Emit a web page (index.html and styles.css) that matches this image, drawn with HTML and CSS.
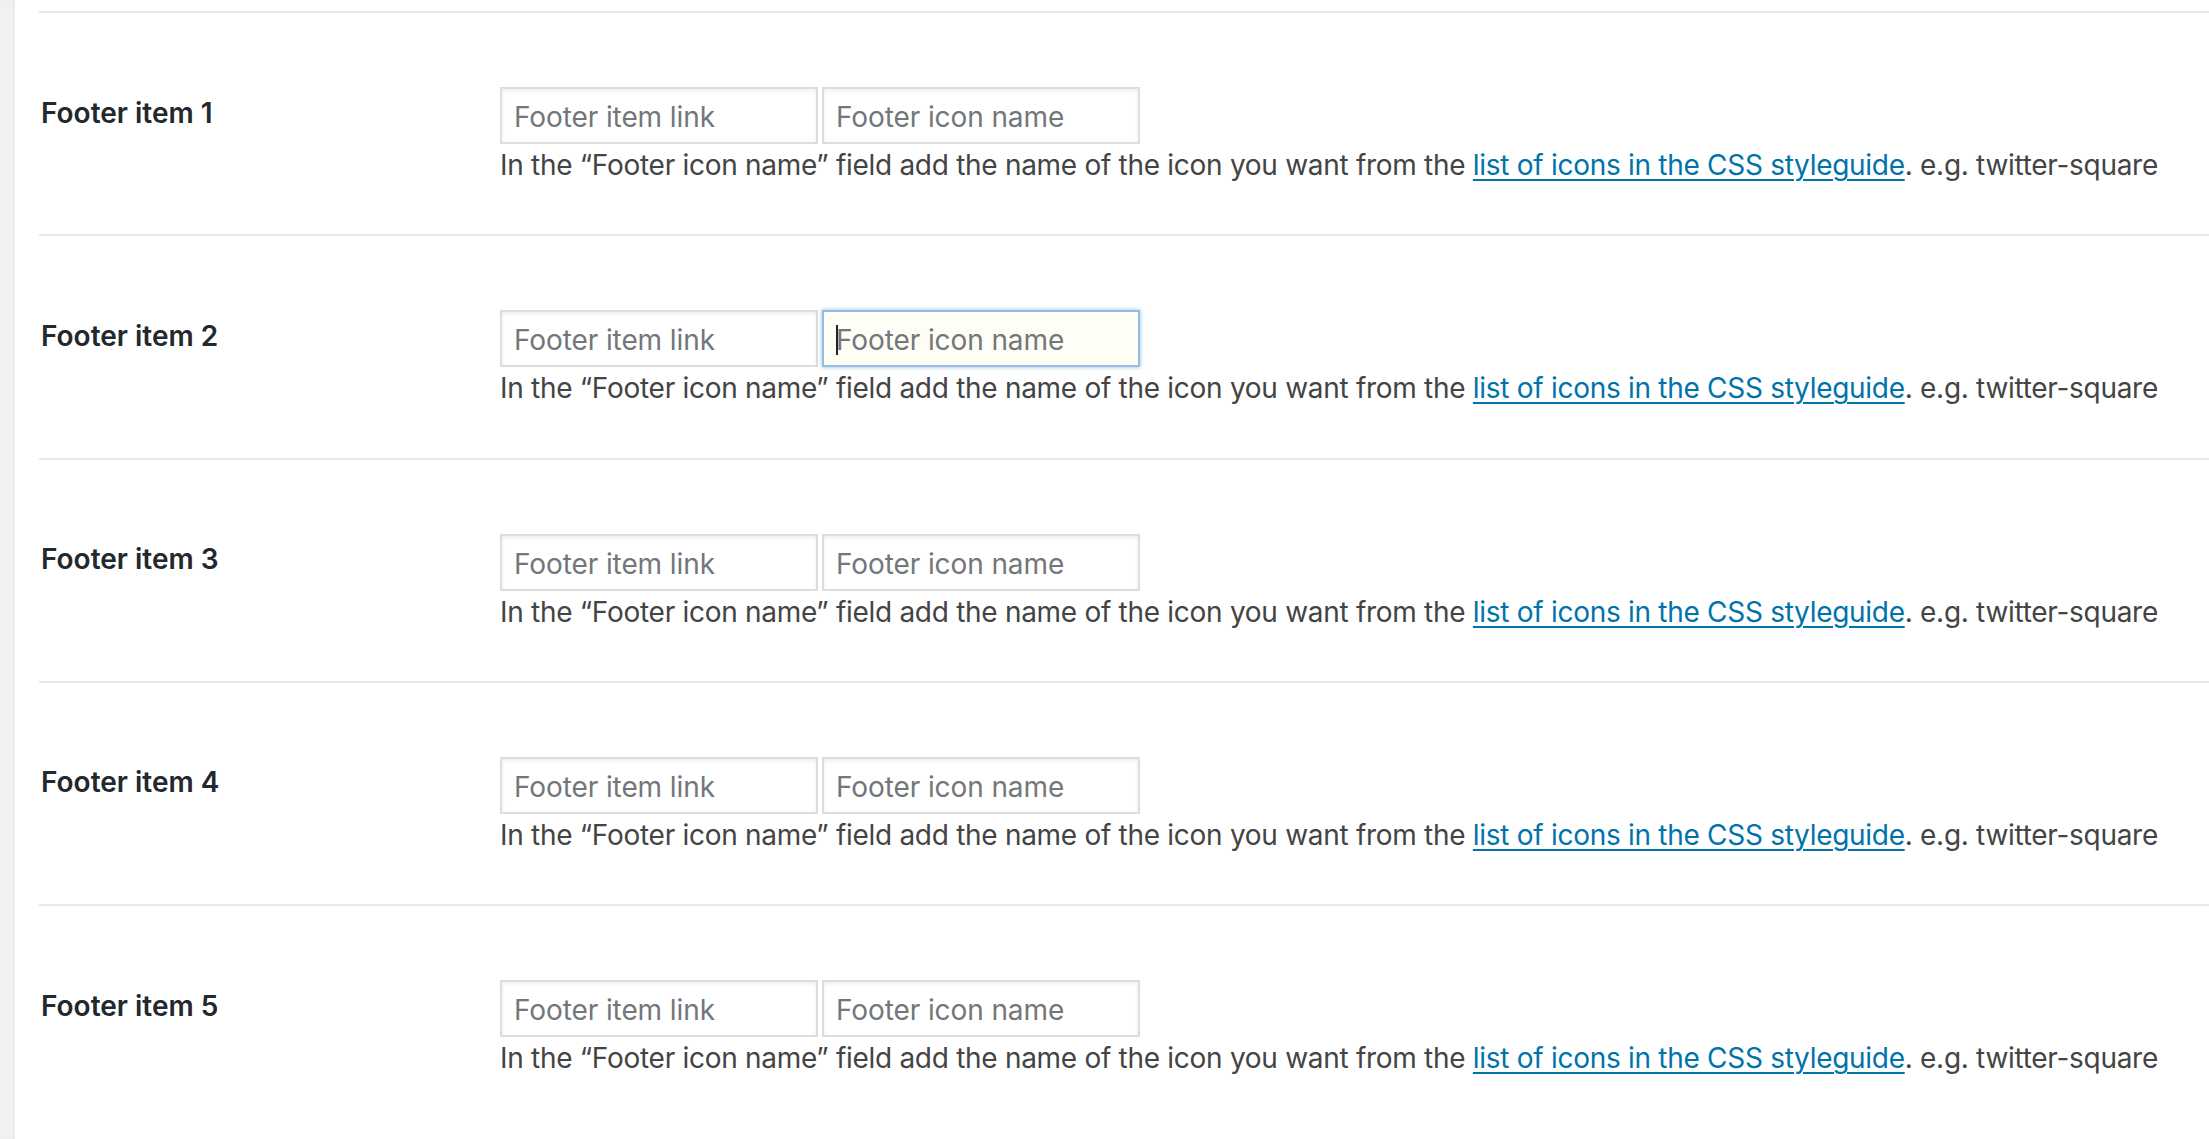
FILE: index.html
```html
<!DOCTYPE html>
<html lang="en">
<head>
<meta charset="utf-8">
<title>Footer settings</title>
<link rel="stylesheet" href="styles.css">
</head>
<body>
<div class="screen">
  <aside class="sidebar-edge"></aside>
  <main class="settings">
    <div class="field-row">
      <div class="field-label">Footer item 1</div>
      <div class="field-control">
        <div class="inputs">
          <input class="text-input" type="text" placeholder="Footer item link">
          <input class="text-input" type="text" placeholder="Footer icon name">
        </div>
        <p class="description">In the “Footer icon name” field add the name of the icon you want from the <a href="#">list of icons in the CSS styleguide</a>. e.g. twitter-square</p>
      </div>
    </div>
    <div class="field-row">
      <div class="field-label">Footer item 2</div>
      <div class="field-control">
        <div class="inputs">
          <input class="text-input" type="text" placeholder="Footer item link">
          <span class="focus-wrap"><input class="text-input is-focused" type="text" placeholder="Footer icon name"><span class="caret"></span></span>
        </div>
        <p class="description">In the “Footer icon name” field add the name of the icon you want from the <a href="#">list of icons in the CSS styleguide</a>. e.g. twitter-square</p>
      </div>
    </div>
    <div class="field-row">
      <div class="field-label">Footer item 3</div>
      <div class="field-control">
        <div class="inputs">
          <input class="text-input" type="text" placeholder="Footer item link">
          <input class="text-input" type="text" placeholder="Footer icon name">
        </div>
        <p class="description">In the “Footer icon name” field add the name of the icon you want from the <a href="#">list of icons in the CSS styleguide</a>. e.g. twitter-square</p>
      </div>
    </div>
    <div class="field-row">
      <div class="field-label">Footer item 4</div>
      <div class="field-control">
        <div class="inputs">
          <input class="text-input" type="text" placeholder="Footer item link">
          <input class="text-input" type="text" placeholder="Footer icon name">
        </div>
        <p class="description">In the “Footer icon name” field add the name of the icon you want from the <a href="#">list of icons in the CSS styleguide</a>. e.g. twitter-square</p>
      </div>
    </div>
    <div class="field-row">
      <div class="field-label">Footer item 5</div>
      <div class="field-control">
        <div class="inputs">
          <input class="text-input" type="text" placeholder="Footer item link">
          <input class="text-input" type="text" placeholder="Footer icon name">
        </div>
        <p class="description">In the “Footer icon name” field add the name of the icon you want from the <a href="#">list of icons in the CSS styleguide</a>. e.g. twitter-square</p>
      </div>
    </div>
  </main>
</div>
</body>
</html>
```

FILE: styles.css
```css
html, body {
  margin: 0;
  padding: 0;
  background: #fff;
}

body {
  font-family: Inter, "Noto Sans", sans-serif;
  font-size: 28px;
  color: #444;
  overflow: hidden;
}

.screen {
  display: flex;
  min-height: 1139px;
}

.sidebar-edge {
  flex: 0 0 15px;
  background: #f1f1f1;
  box-shadow: inset -2px 0 2px rgba(0, 0, 0, 0.03);
}

.settings {
  flex: 1;
  padding: 11px 0 0 24px;
}

.field-row {
  display: grid;
  grid-template-columns: 461px 1fr;
  border-top: 2px solid #e8e8e8;
  padding: 74px 0 48.3px;
}

.field-label {
  font-weight: 600;
  color: #23282d;
  line-height: 36.4px;
  padding: 7.6px 0 0 2px;
}

.field-control {
  display: flex;
  flex-direction: column;
}

.inputs {
  display: flex;
  gap: 4px;
}

.text-input {
  box-sizing: border-box;
  width: 318px;
  height: 57px;
  margin: 0;
  padding: 3px 12px 0;
  border: 2px solid #ddd;
  border-radius: 0;
  box-shadow: inset 0 2px 4px rgba(0, 0, 0, 0.07);
  background: #fff;
  font-family: inherit;
  font-size: 28px;
  letter-spacing: -0.1px;
  color: #32373c;
  outline: none;
}

.text-input::placeholder {
  color: #72777c;
  opacity: 1;
}

.focus-wrap {
  position: relative;
  display: block;
}

.text-input.is-focused {
  border-color: #93bde2;
  background: #fffef6;
  box-shadow: 0 0 4px rgba(30, 140, 190, 0.55);
}

.caret {
  position: absolute;
  left: 14px;
  top: 15px;
  width: 2px;
  height: 30px;
  background: #222;
}

.description {
  margin: 0;
  line-height: 42px;
  color: #444;
  letter-spacing: -0.29px;
  white-space: nowrap;
}

.description a {
  color: #0073aa;
  text-decoration: underline;
  text-decoration-thickness: 2px;
  text-underline-offset: 4px;
}
```
